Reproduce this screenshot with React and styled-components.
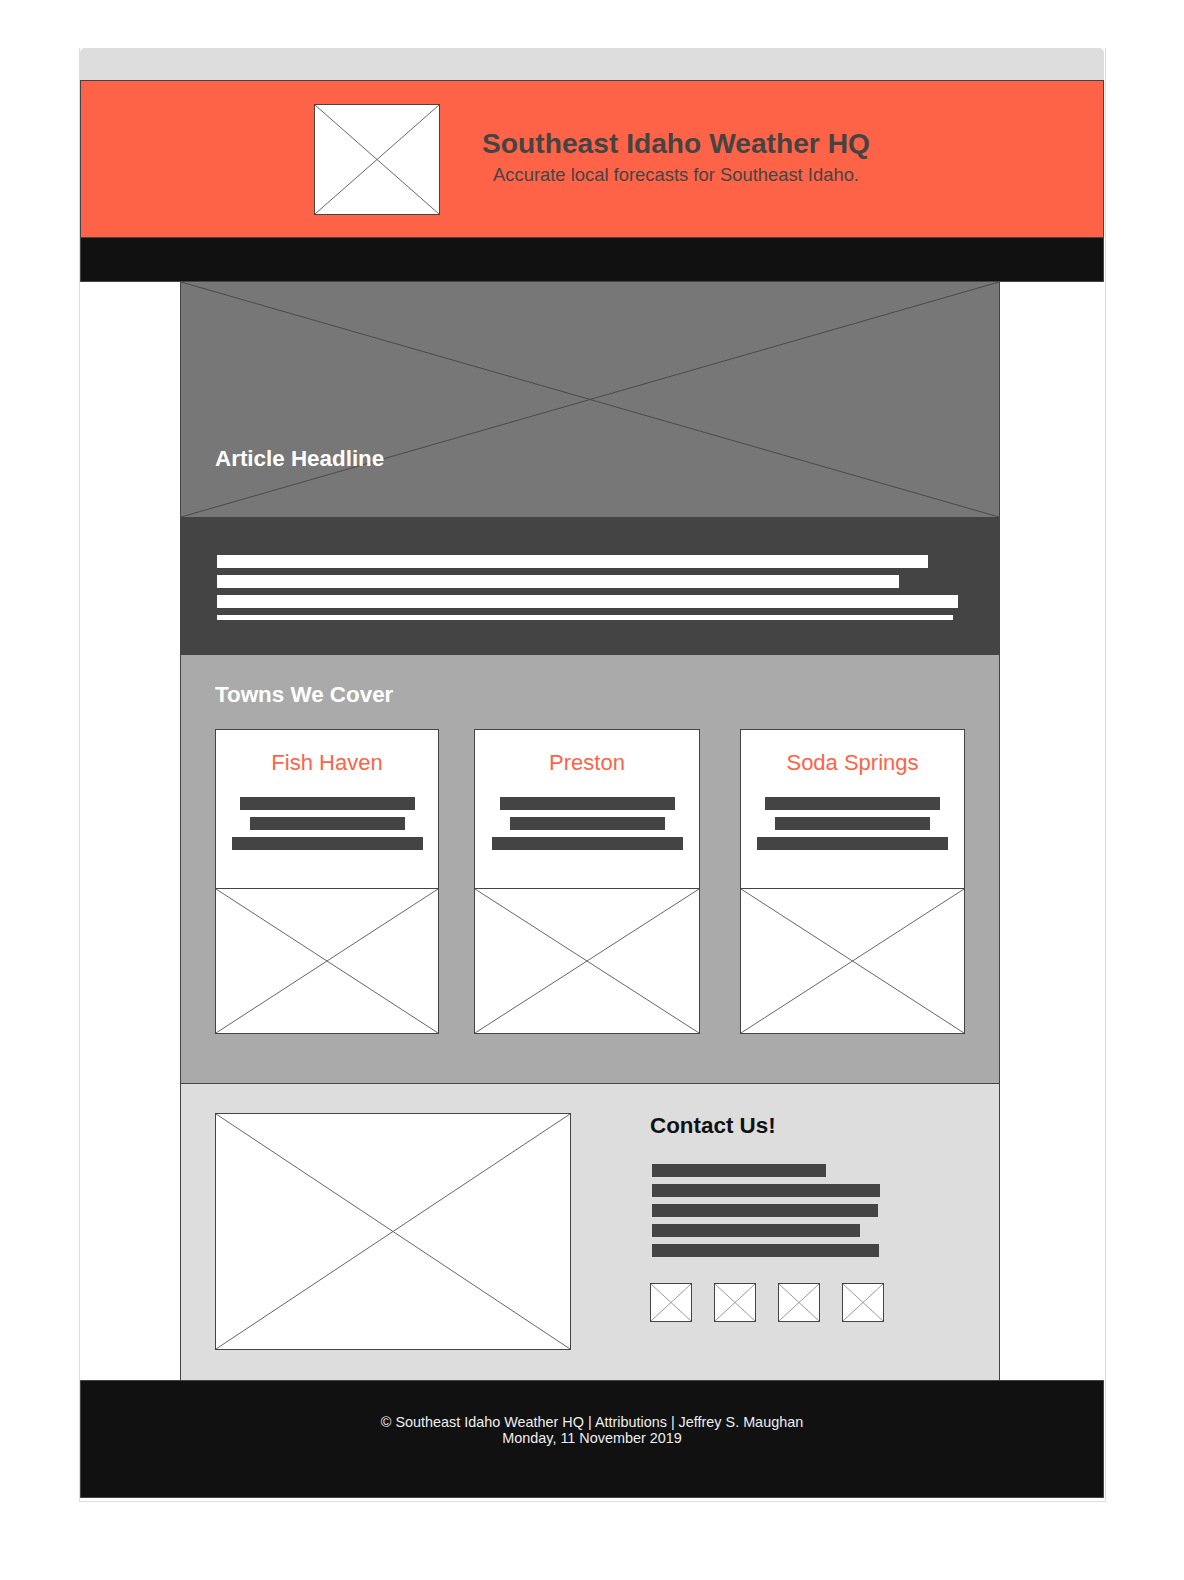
import styled, { createGlobalStyle } from 'styled-components';

const tomato = '#ff6347';
const ink = '#444';

const GlobalStyle = createGlobalStyle`
  body {
    margin: 0;
    background: #fff;
    font-family: "Liberation Sans", Arial, sans-serif;
  }
`;

const Window = styled.div`
  width: 1027px;
  margin: 48px 0 78px 79px;
  box-sizing: border-box;
  border: 1px solid #ddd;
  border-top: none;
  padding: 0 1px 3px 0;
`;

const TitleBar = styled.div`
  height: 32px;
  background: #ddd;
  border-radius: 5px 5px 0 0;
`;

const CrossSvg = styled.svg`
  display: block;
  width: 100%;
  height: 100%;
`;

const Cross = ({ color = '#666' }) => (
  <CrossSvg viewBox="0 0 100 100" preserveAspectRatio="none">
    <line x1="0" y1="0" x2="100" y2="100" stroke={color} strokeWidth="1" vectorEffect="non-scaling-stroke" />
    <line x1="100" y1="0" x2="0" y2="100" stroke={color} strokeWidth="1" vectorEffect="non-scaling-stroke" />
  </CrossSvg>
);

const ImageBox = styled.div`
  box-sizing: border-box;
  flex: none;
  width: ${({ $w }) => $w};
  height: ${({ $h }) => $h};
  background: #fff;
  border: 1px solid ${ink};
  overflow: hidden;
`;

const Placeholder = ({ w, h, color }) => (
  <ImageBox $w={w} $h={h}>
    <Cross color={color} />
  </ImageBox>
);

const Header = styled.header`
  box-sizing: border-box;
  height: 158px;
  background: ${tomato};
  border: 1px solid ${ink};
  display: flex;
  align-items: center;
  justify-content: center;
  gap: 42px;
`;

const Brand = styled.div`
  text-align: center;
  color: ${ink};
  margin-bottom: 5px;
`;

const SiteTitle = styled.h1`
  margin: 0;
  font-size: 28.2px;
  font-weight: 700;
`;

const Tagline = styled.p`
  margin: 4px 0 0;
  font-size: 18.4px;
`;

const Nav = styled.nav`
  box-sizing: border-box;
  height: 44px;
  background: #111;
  border: 1px solid ${ink};
  border-top: none;
`;

const Main = styled.main`
  box-sizing: border-box;
  width: 820px;
  margin-left: 100px;
  border-left: 1px solid ${ink};
  border-right: 1px solid ${ink};
`;

const Hero = styled.section`
  position: relative;
  box-sizing: border-box;
  height: 235px;
  background: #777;
  display: flex;
  align-items: flex-end;
  padding: 0 0 45px 34px;
`;

const HeroCross = styled.div`
  position: absolute;
  inset: 0;
`;

const Headline = styled.h2`
  position: relative;
  margin: 0;
  font-size: 22.4px;
  font-weight: 700;
  color: #fff;
`;

const Article = styled.section`
  box-sizing: border-box;
  height: 138px;
  background: ${ink};
  padding: 38px 0 0 36px;
`;

const Lines = styled.div`
  display: flex;
  flex-direction: column;
  align-items: ${({ $center }) => ($center ? 'center' : 'flex-start')};
  gap: 7px;
`;

const Bar = styled.span`
  display: block;
  width: ${({ $w }) => $w}px;
  height: ${({ $h = 13 }) => $h}px;
  background: ${({ $color = ink }) => $color};
`;

const Towns = styled.section`
  background: #aaa;
  padding: 27px 34px 49px;
  border-bottom: 1px solid ${ink};
`;

const SectionTitle = styled.h2`
  margin: 0 0 21px;
  font-size: 22.4px;
  font-weight: 700;
  color: #fff;
`;

const ContactTitle = styled.h2`
  margin: 0;
  font-size: 22.4px;
  font-weight: 700;
  color: #111;
`;

const CardRow = styled.div`
  display: flex;
  gap: 35px;
`;

const Card = styled.article`
  box-sizing: border-box;
  width: ${({ $w }) => $w}px;
  background: #fff;
  border: 1px solid ${ink};
  display: flex;
  flex-direction: column;
  &:last-child {
    margin-left: auto;
  }
`;

const CardBody = styled.div`
  box-sizing: border-box;
  height: 158px;
  padding-top: 20px;
  text-align: center;
`;

const CardTitle = styled.h3`
  margin: 0 0 21px;
  font-size: 22px;
  font-weight: 400;
  color: ${tomato};
`;

const CardImage = styled.div`
  box-sizing: border-box;
  height: 145px;
  border-top: 1px solid ${ink};
`;

const Contact = styled.section`
  background: #ddd;
  padding: 29px 34px 30px;
  display: flex;
  gap: 79px;
`;

const ContactInfo = styled.div`
  display: flex;
  flex-direction: column;
`;

const ContactLines = styled(Lines)`
  margin: 25px 0 0 2px;
`;

const Socials = styled.div`
  display: flex;
  gap: 22px;
  margin-top: 26px;
`;

const Footer = styled.footer`
  box-sizing: border-box;
  height: 118px;
  background: #111;
  border: 1px solid ${ink};
  padding-top: 33px;
  text-align: center;
  color: #eee;
  font-size: 14.4px;
  line-height: 16px;
`;

const towns = [
  { name: 'Fish Haven', w: 224 },
  { name: 'Preston', w: 226 },
  { name: 'Soda Springs', w: 225 },
];

const articleLines = [
  { w: 711 },
  { w: 682 },
  { w: 741 },
  { w: 736, h: 5 },
];

const contactLines = [174, 228, 226, 208, 227];

export default function App() {
  return (
    <>
      <GlobalStyle />
      <Window>
        <TitleBar />
        <Header>
          <Placeholder w="126px" h="111px" />
          <Brand>
            <SiteTitle>Southeast Idaho Weather HQ</SiteTitle>
            <Tagline>Accurate local forecasts for Southeast Idaho.</Tagline>
          </Brand>
        </Header>
        <Nav />
        <Main>
          <Hero>
            <HeroCross>
              <Cross color="#4a4a4a" />
            </HeroCross>
            <Headline>Article Headline</Headline>
          </Hero>
          <Article>
            <Lines>
              {articleLines.map((l, i) => (
                <Bar key={i} $w={l.w} $h={l.h} $color="#fff" />
              ))}
            </Lines>
          </Article>
          <Towns>
            <SectionTitle>Towns We Cover</SectionTitle>
            <CardRow>
              {towns.map((t) => (
                <Card key={t.name} $w={t.w}>
                  <CardBody>
                    <CardTitle>{t.name}</CardTitle>
                    <Lines $center>
                      <Bar $w={175} />
                      <Bar $w={155} />
                      <Bar $w={191} />
                    </Lines>
                  </CardBody>
                  <CardImage>
                    <Cross />
                  </CardImage>
                </Card>
              ))}
            </CardRow>
          </Towns>
          <Contact>
            <Placeholder w="356px" h="237px" />
            <ContactInfo>
              <ContactTitle>Contact Us!</ContactTitle>
              <ContactLines>
                {contactLines.map((w, i) => (
                  <Bar key={i} $w={w} />
                ))}
              </ContactLines>
              <Socials>
                {[0, 1, 2, 3].map((i) => (
                  <Placeholder key={i} w="42px" h="39px" color="#999" />
                ))}
              </Socials>
            </ContactInfo>
          </Contact>
        </Main>
        <Footer>
          © Southeast Idaho Weather HQ | Attributions | Jeffrey S. Maughan
          <br />
          Monday, 11 November 2019
        </Footer>
      </Window>
    </>
  );
}
